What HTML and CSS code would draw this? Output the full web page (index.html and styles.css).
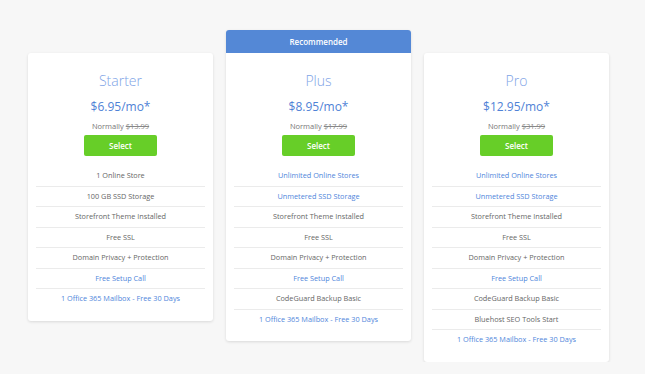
FILE: index.html
```html
<!DOCTYPE html>
<html>
<head>
<meta charset="utf-8">
<link rel="stylesheet" href="styles.css">
</head>
<body>
<div class="plans">
  <div class="card offset">
    <div class="body">
      <div class="name">Starter</div>
      <div class="price">$6.95/mo*</div>
      <div class="normal">Normally <s>$13.99</s></div>
      <div class="btn">Select</div>
      <ul class="features">
        <li>1 Online Store</li>
        <li>100 GB SSD Storage</li>
        <li>Storefront Theme Installed</li>
        <li>Free SSL</li>
        <li>Domain Privacy + Protection</li>
        <li class="hl">Free Setup Call</li>
        <li class="hl">1 Office 365 Mailbox - Free 30 Days</li>
      </ul>
    </div>
  </div>
  <div class="card rec">
    <div class="ribbon">Recommended</div>
    <div class="body">
      <div class="name">Plus</div>
      <div class="price">$8.95/mo*</div>
      <div class="normal">Normally <s>$17.99</s></div>
      <div class="btn">Select</div>
      <ul class="features">
        <li class="hl">Unlimited Online Stores</li>
        <li class="hl">Unmetered SSD Storage</li>
        <li>Storefront Theme Installed</li>
        <li>Free SSL</li>
        <li>Domain Privacy + Protection</li>
        <li class="hl">Free Setup Call</li>
        <li>CodeGuard Backup Basic</li>
        <li class="hl">1 Office 365 Mailbox - Free 30 Days</li>
      </ul>
    </div>
  </div>
  <div class="card offset">
    <div class="body">
      <div class="name">Pro</div>
      <div class="price">$12.95/mo*</div>
      <div class="normal">Normally <s>$31.99</s></div>
      <div class="btn">Select</div>
      <ul class="features">
        <li class="hl">Unlimited Online Stores</li>
        <li class="hl">Unmetered SSD Storage</li>
        <li>Storefront Theme Installed</li>
        <li>Free SSL</li>
        <li>Domain Privacy + Protection</li>
        <li class="hl">Free Setup Call</li>
        <li>CodeGuard Backup Basic</li>
        <li>Bluehost SEO Tools Start</li>
        <li class="hl">1 Office 365 Mailbox - Free 30 Days</li>
      </ul>
    </div>
  </div>
</div>
</body>
</html>
```

FILE: styles.css
```css
html, body {
  margin: 0;
  padding: 0;
  background: #f7f7f7;
  font-family: "Open Sans", "DejaVu Sans", sans-serif;
}
.plans {
  display: flex;
  align-items: flex-start;
  gap: 13px;
  padding: 30px 0 0 28px;
}
.card {
  width: 185px;
  background: #fff;
  border-radius: 3px;
  box-shadow: 0 1px 3px rgba(0, 0, 0, 0.12);
}
.card.offset {
  margin-top: 23px;
}
.ribbon {
  height: 23px;
  line-height: 23px;
  background: #5488d6;
  color: #fff;
  font-size: 8px;
  font-weight: 600;
  text-align: center;
  border-radius: 3px 3px 0 0;
}
.body {
  padding: 18px 8px 12px;
  text-align: center;
}
.name {
  font-size: 14px;
  font-weight: 300;
  line-height: 19px;
  color: #7ea3e6;
}
.price {
  margin-top: 9px;
  font-size: 12px;
  line-height: 16px;
  color: #4f82d6;
}
.normal {
  margin-top: 6px;
  font-size: 7.5px;
  line-height: 11px;
  color: #777;
}
.normal s {
  color: #888;
}
.btn {
  width: 73px;
  height: 21px;
  line-height: 21px;
  margin: 3px auto 0;
  background: #67ce28;
  color: #fff;
  font-size: 8px;
  font-weight: 600;
  border-radius: 2px;
}
.features {
  list-style: none;
  margin: 10px 0 0;
  padding: 0;
}
.features li {
  font-size: 7.3px;
  line-height: 11px;
  padding: 4.25px 0;
  border-bottom: 1px solid #ebebeb;
  color: #666;
}
.features li:last-child {
  border-bottom: none;
}
.features li.hl {
  color: #4f86db;
}
```
